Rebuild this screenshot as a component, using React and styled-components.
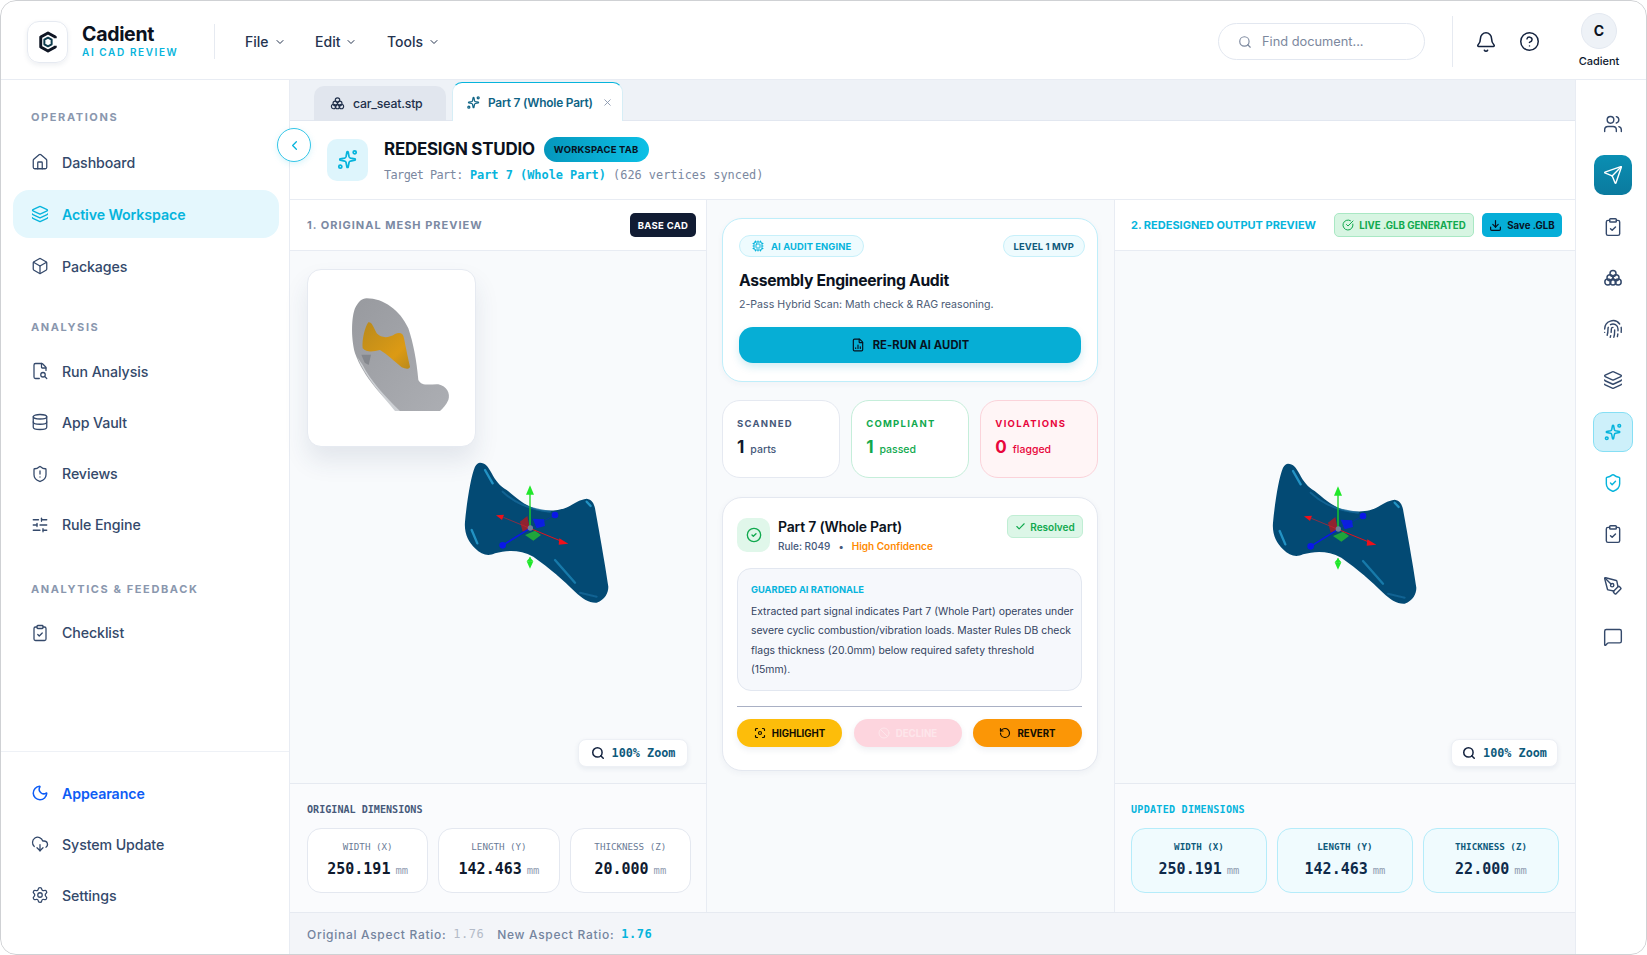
import React from 'react';
import styled, { createGlobalStyle } from 'styled-components';
import {
  Bell, Box, ChevronDown, ChevronLeft, CircleCheck, CircleCheckBig, CircleHelp, ClipboardCheck,
  CloudDownload, Cpu, Database, Download, FileChartColumn, FileSearch2, Fingerprint, Focus, House,
  Ban, Check, Layers, MessageSquare, Moon, PenTool, RotateCcw, Search, Send, Settings, ShieldAlert,
  ShieldCheck, SlidersHorizontal, Users, X
} from 'lucide-react';

const MONO = '"DejaVu Sans Mono", "Liberation Mono", monospace';
const CYAN = '#06b4dc';

const GlobalStyle = createGlobalStyle`
  html, body {
    margin: 0;
    padding: 0;
    background: #fff;
    font-family: Inter, "Noto Sans", sans-serif;
    -webkit-font-smoothing: antialiased;
  }
  * { box-sizing: border-box; }
`;

const Frame = styled.div`
  position: relative;
  width: 1647px;
  height: 955px;
  display: flex;
  flex-direction: column;
  background: #fff;
  border-radius: 16px;
  overflow: hidden;
  &::after {
    content: '';
    position: absolute;
    inset: 0;
    border: 1.5px solid #cfd1d4;
    border-radius: 16px;
    pointer-events: none;
  }
`;

/* top bar */
const TopBar = styled.header`
  height: 80px;
  flex: none;
  display: flex;
  align-items: center;
  padding: 4px 23px 0 27px;
  border-bottom: 1px solid #e8ecf3;
`;

const LogoBox = styled.div`
  width: 41px;
  height: 42px;
  border: 1px solid #e6eaf1;
  border-radius: 12px;
  display: flex;
  align-items: center;
  justify-content: center;
  box-shadow: 0 2px 5px rgba(30, 50, 90, 0.08);
`;

const Brand = styled.div`
  margin: -2px 0 0 14px;
  width: 95px;
  display: flex;
  flex-direction: column;
`;

const BrandName = styled.div`
  font-size: 19.5px;
  font-weight: 700;
  line-height: 24px;
  letter-spacing: -0.3px;
  color: #0b1220;
`;

const BrandSub = styled.div`
  font-size: 10px;
  font-weight: 600;
  line-height: 13px;
  letter-spacing: 1.6px;
  color: ${CYAN};
  white-space: nowrap;
`;

const VRule = styled.div`
  width: 1px;
  height: ${(p) => p.$h}px;
  margin-left: ${(p) => p.$ml}px;
  background: #e6eaf1;
`;

const Menu = styled.nav`
  margin-left: 30px;
  display: flex;
  gap: 29.5px;
`;

const MenuItem = styled.div`
  display: flex;
  align-items: center;
  gap: 5px;
  font-size: 14px;
  font-weight: 500;
  color: #25344f;
`;

const SearchBox = styled.div`
  margin-left: auto;
  width: 207px;
  height: 37px;
  border: 1px solid #e2e7f0;
  border-radius: 19px;
  display: flex;
  align-items: center;
  gap: 10px;
  padding-left: 19px;
  font-size: 12.8px;
  color: #7c889e;
`;

const HeadIcon = styled.div`
  margin-left: ${(p) => p.$ml}px;
  display: flex;
  color: #14233f;
`;

const UserBox = styled.div`
  margin-left: 34px;
  width: 50px;
  margin-top: -3px;
  display: flex;
  flex-direction: column;
  align-items: center;
  gap: 5px;
`;

const Avatar = styled.div`
  width: 36px;
  height: 36px;
  border-radius: 50%;
  background: #eef2f7;
  border: 1px solid #e3e8f0;
  display: flex;
  align-items: center;
  justify-content: center;
  font-size: 14px;
  font-weight: 700;
  color: #0b1220;
`;

const UserName = styled.div`
  font-size: 11px;
  font-weight: 500;
  color: #0f1a2e;
`;

/* left sidebar */
const Body = styled.div`
  flex: 1;
  display: flex;
  min-height: 0;
`;

const Sidebar = styled.aside`
  width: 290px;
  flex: none;
  display: flex;
  flex-direction: column;
  border-right: 1px solid #e8ecf3;
`;

const NavTop = styled.div`
  padding: 30px 10px 0 13px;
`;

const NavSection = styled.div`
  display: flex;
  flex-direction: column;
  gap: 3.2px;
  margin-bottom: 33px;
  &:first-child {
    gap: 4px;
    margin-bottom: 30px;
  }
`;

const NavLabel = styled.div`
  padding-left: 18px;
  height: 14px;
  margin-bottom: 10px;
  font-size: 11px;
  line-height: 14px;
  font-weight: 700;
  letter-spacing: 1.6px;
  color: #8a97ae;
`;

const NavRow = styled.div`
  height: 48px;
  display: flex;
  align-items: center;
  gap: 13px;
  padding-left: 18px;
  border-radius: 16px;
  font-size: 14.2px;
  letter-spacing: -0.1px;
  font-weight: ${(p) => (p.$active || p.$blue ? 600 : 500)};
  color: ${(p) => (p.$active ? CYAN : p.$blue ? '#0d5cf5' : '#34496b')};
  background: ${(p) => (p.$active ? '#e4f7fd' : 'transparent')};
`;

const NavBottom = styled.div`
  margin-top: auto;
  padding: 17px 10px 36px 13px;
  border-top: 1px solid #eef1f6;
  display: flex;
  flex-direction: column;
  gap: 3px;
`;

/* centre */
const Main = styled.main`
  position: relative;
  flex: 1;
  min-width: 0;
  display: flex;
  flex-direction: column;
`;

const CollapseBtn = styled.div`
  position: absolute;
  left: -13px;
  top: 48px;
  width: 34px;
  height: 34px;
  border-radius: 50%;
  background: #fff;
  border: 1px solid #35c6e8;
  color: ${CYAN};
  display: flex;
  align-items: center;
  justify-content: center;
  box-shadow: 0 2px 6px rgba(6, 180, 220, 0.15);
  z-index: 2;
`;

const TabBar = styled.div`
  height: 41px;
  flex: none;
  display: flex;
  align-items: flex-end;
  gap: 6px;
  padding-left: 24px;
  background: #eef2f7;
  border-bottom: 1px solid #e2e7f0;
`;

const Tab = styled.div`
  height: ${(p) => (p.$active ? 39 : 35)}px;
  margin-bottom: -1px;
  width: ${(p) => (p.$active ? 171 : 132)}px;
  display: flex;
  align-items: center;
  gap: ${(p) => (p.$active ? 7 : 8)}px;
  padding-left: ${(p) => (p.$active ? 13 : 16)}px;
  border-radius: 10px 10px 0 0;
  font-size: ${(p) => (p.$active ? 11.9 : 12.3)}px;
  font-weight: ${(p) => (p.$active ? 600 : 500)};
  letter-spacing: -0.2px;
  white-space: nowrap;
  color: ${(p) => (p.$active ? '#0e6385' : '#22314c')};
  background: ${(p) => (p.$active ? '#fff' : '#e1e6ee')};
  border: ${(p) => (p.$active ? '1px solid #d6eef6' : 'none')};
  border-top: ${(p) => (p.$active ? `1px solid ${CYAN}` : 'none')};
  border-bottom: none;
`;

const TabClose = styled.span`
  display: flex;
  margin-left: 2px;
  color: #8a97ae;
`;

const StudioHead = styled.div`
  height: 79px;
  flex: none;
  display: flex;
  align-items: center;
  gap: 16px;
  padding: 0 0 1px 37px;
  background: #fff;
  border-bottom: 1px solid #e8ecf3;
`;

const StudioIcon = styled.div`
  width: 41px;
  height: 42px;
  border-radius: 10px;
  background: #def5fc;
  color: ${CYAN};
  display: flex;
  align-items: center;
  justify-content: center;
`;

const StudioText = styled.div`
  display: flex;
  flex-direction: column;
  gap: 6px;
`;

const TitleRow = styled.div`
  display: flex;
  align-items: center;
  gap: 9px;
`;

const StudioTitle = styled.h1`
  margin: 0;
  font-size: 16.9px;
  line-height: 26px;
  font-weight: 700;
  letter-spacing: -0.2px;
  color: #0b1220;
`;

const WorkspaceBadge = styled.span`
  height: 25px;
  padding: 0 10px;
  border-radius: 13px;
  background: linear-gradient(90deg, #0597bd, #0cc0e6);
  display: flex;
  align-items: center;
  font-size: 9.5px;
  font-weight: 700;
  letter-spacing: 0.2px;
  color: #06121f;
`;

const StudioSub = styled.div`
  font-family: ${MONO};
  font-size: 11.9px;
  line-height: 15px;
  color: #7b889f;
  i {
    font-style: normal;
    letter-spacing: -0.6px;
  }
  b {
    font-weight: 700;
    color: ${CYAN};
  }
`;

const Columns = styled.div`
  flex: 1;
  min-height: 0;
  display: grid;
  grid-template-columns: 416px 409px 460px;
`;

const Column = styled.section`
  display: flex;
  flex-direction: column;
  min-width: 0;
  background: #fff;
`;

const ColHead = styled.div`
  height: 51px;
  flex: none;
  display: flex;
  align-items: center;
  padding: 0 10px 0 ${(p) => (p.$right ? 16 : 17)}px;
  border-bottom: 1px solid #e8ecf3;
`;

const ColTitle = styled.div`
  font-size: 11px;
  font-weight: 700;
  letter-spacing: ${(p) => (p.$cyan ? 0 : 1)}px;
  color: ${(p) => (p.$cyan ? CYAN : '#7b8aa3')};
`;

const DarkBadge = styled.div`
  margin-left: auto;
  width: 66px;
  height: 24px;
  border-radius: 5px;
  background: #111c33;
  color: #fff;
  display: flex;
  align-items: center;
  justify-content: center;
  font-size: 9.5px;
  font-weight: 700;
  letter-spacing: 0.3px;
`;

const LiveBadge = styled.div`
  margin-left: auto;
  width: 140px;
  height: 24px;
  border-radius: 5px;
  background: #d7f5e2;
  border: 1px solid #a9e8c4;
  color: #10a94e;
  display: flex;
  align-items: center;
  justify-content: center;
  gap: 5px;
  font-size: 9.7px;
  font-weight: 700;
`;

const SaveBadge = styled.div`
  margin-left: 8px;
  margin-right: 3px;
  width: 80px;
  height: 24px;
  border-radius: 5px;
  background: #06aed8;
  color: #06121f;
  display: flex;
  align-items: center;
  justify-content: center;
  gap: 5px;
  font-size: 9.7px;
  font-weight: 700;
`;

const Viewer = styled.div`
  position: relative;
  flex: 1;
  background: #f8fafc;
`;

const Thumb = styled.div`
  position: absolute;
  left: 17px;
  top: 18px;
  width: 169px;
  height: 178px;
  padding: 10px 0 0 12px;
  border: 1px solid #e6eaf1;
  border-radius: 14px;
  background: #fff;
  box-shadow: 0 14px 24px rgba(40, 60, 100, 0.1);
`;

const MeshHolder = styled.div`
  position: absolute;
  left: ${(p) => p.$x}px;
  top: ${(p) => p.$y}px;
  width: 200px;
  height: 180px;
`;

const ZoomChip = styled.div`
  position: absolute;
  right: ${(p) => p.$r}px;
  bottom: 16px;
  width: ${(p) => p.$w}px;
  height: 28px;
  border-radius: 8px;
  background: #fff;
  border: 1px solid #edf0f5;
  box-shadow: 0 2px 5px rgba(40, 60, 100, 0.08);
  display: flex;
  align-items: center;
  justify-content: center;
  gap: 7px;
  font-family: ${MONO};
  font-size: 11.8px;
  font-weight: 700;
  color: #0e5a7c;
  svg {
    color: #14233f;
  }
`;

const DimPanel = styled.div`
  height: 129px;
  flex: none;
  padding: 19px ${(p) => (p.$cyan ? 16 : 15)}px 0 ${(p) => (p.$cyan ? 16 : 17)}px;
  background: #fafbfd;
  border-top: 1px solid #e6eaf1;
`;

const DimTitle = styled.div`
  height: 14px;
  margin-bottom: 11px;
  font-family: ${MONO};
  font-size: 10.1px;
  line-height: 14px;
  font-weight: 700;
  letter-spacing: ${(p) => (p.$cyan ? 0.25 : 0)}px;
  color: ${(p) => (p.$cyan ? CYAN : '#46597a')};
`;

const DimGrid = styled.div`
  display: grid;
  grid-template-columns: 1fr 1fr 1fr;
  gap: 10px;
`;

const DimCard = styled.div`
  height: 65px;
  border-radius: 14px;
  border: 1px solid ${(p) => (p.$cyan ? '#b5ecfa' : '#e4e8f0')};
  background: ${(p) => (p.$cyan ? '#f0fbfe' : '#fff')};
  display: flex;
  flex-direction: column;
  align-items: center;
  justify-content: center;
  gap: 7px;
`;

const DimName = styled.div`
  font-family: ${MONO};
  font-size: 9.2px;
  line-height: 12px;
  font-weight: ${(p) => (p.$cyan ? 700 : 400)};
  color: ${(p) => (p.$cyan ? '#0e5a7c' : '#6a7b96')};
`;

const DimValue = styled.div`
  font-family: ${MONO};
  font-size: 15px;
  line-height: 19px;
  font-weight: 700;
  color: ${(p) => (p.$cyan ? '#0e2a4a' : '#0f1a2e')};
  small {
    margin-left: 5px;
    font-size: 10.5px;
    font-weight: 400;
    color: #8f9bb0;
  }
`;

/* audit column */
const AuditColumn = styled.section`
  display: flex;
  flex-direction: column;
  gap: 18px;
  padding: 18px 16px 0 15px;
  background: #f8fafc;
  border-left: 1px solid #e8ecf3;
  border-right: 1px solid #e8ecf3;
`;

const EngineCard = styled.div`
  height: 164px;
  padding: 16px 16px 0;
  border: 1px solid #bfeefa;
  border-radius: 20px;
  background: #fff;
  box-shadow: 0 2px 6px rgba(40, 60, 100, 0.04);
`;

const PillRow = styled.div`
  display: flex;
  justify-content: space-between;
  margin-right: -4px;
`;

const Pill = styled.div`
  height: 22px;
  padding: 0 ${(p) => (p.$dark ? 10 : 12)}px;
  border-radius: 11px;
  border: 1px solid #c7f0fa;
  background: #eefbfe;
  display: flex;
  align-items: center;
  gap: 7px;
  font-size: 9.4px;
  font-weight: 700;
  letter-spacing: 0.1px;
  color: ${(p) => (p.$dark ? '#0e5a7c' : CYAN)};
`;

const EngineTitle = styled.h2`
  margin: 12px 0 0;
  font-size: 15.7px;
  line-height: 24px;
  font-weight: 700;
  letter-spacing: -0.3px;
  color: #0b1220;
`;

const EngineSub = styled.p`
  margin: 4px 0 0;
  font-size: 10.6px;
  line-height: 16px;
  color: #4a5a75;
`;

const RunButton = styled.div`
  margin-top: 14px;
  height: 36px;
  border-radius: 14px;
  background: #06aed5;
  box-shadow: 0 4px 8px rgba(6, 150, 190, 0.18);
  display: flex;
  align-items: center;
  justify-content: center;
  gap: 8px;
  font-size: 11.2px;
  font-weight: 700;
  letter-spacing: 0.1px;
  color: #06121f;
`;

const StatGrid = styled.div`
  display: grid;
  grid-template-columns: 1fr 1fr 1fr;
  gap: 11.5px;
`;

const statTheme = {
  plain: { border: '#e5e9f1', bg: '#fff', label: '#46597a', num: '#0f1a2e', unit: '#46597a' },
  good: { border: '#c5eeda', bg: '#fff', label: '#10a94e', num: '#10a94e', unit: '#10a94e' },
  bad: { border: '#fbd3da', bg: '#fff5f6', label: '#e8063c', num: '#e8063c', unit: '#e8063c' }
};

const StatCard = styled.div`
  height: 78px;
  padding: 16px 0 0 14px;
  border-radius: 18px;
  border: 1px solid ${(p) => statTheme[p.$tone].border};
  background: ${(p) => statTheme[p.$tone].bg};
`;

const StatLabel = styled.div`
  font-size: 9.5px;
  line-height: 13px;
  font-weight: 700;
  letter-spacing: 1.25px;
  color: ${(p) => statTheme[p.$tone].label};
`;

const StatValue = styled.div`
  margin-top: 5px;
  display: flex;
  align-items: baseline;
  gap: 6px;
  font-size: 17px;
  line-height: 24px;
  font-weight: 700;
  color: ${(p) => statTheme[p.$tone].num};
  span {
    font-size: 10.5px;
    font-weight: 500;
    color: ${(p) => statTheme[p.$tone].unit};
  }
`;

const PartCard = styled.div`
  margin-top: 1px;
  height: 274px;
  padding: 18px 15px 0 14px;
  border: 1px solid #e4e8f0;
  border-radius: 20px;
  background: #fff;
  box-shadow: 0 2px 6px rgba(40, 60, 100, 0.05);
`;

const PartHead = styled.div`
  display: flex;
  align-items: flex-start;
  height: 52px;
`;

const PartIcon = styled.div`
  margin-top: 2px;
  width: 33px;
  height: 34px;
  border-radius: 10px;
  background: #e0f7ea;
  color: #10a94e;
  display: flex;
  align-items: center;
  justify-content: center;
`;

const PartInfo = styled.div`
  margin-left: 8px;
`;

const PartName = styled.div`
  font-size: 14px;
  line-height: 21px;
  font-weight: 600;
  letter-spacing: -0.2px;
  color: #0b1220;
`;

const PartMeta = styled.div`
  margin-top: 2px;
  display: flex;
  gap: 8px;
  font-size: 10px;
  line-height: 15px;
  font-weight: 500;
  color: #46597a;
  b {
    font-weight: 600;
    color: #ff8a00;
  }
`;

const Resolved = styled.div`
  margin: -1px -1px 0 auto;
  width: 76px;
  height: 23px;
  border-radius: 6px;
  background: #dcf6e7;
  border: 1px solid #c0eed4;
  color: #10a94e;
  display: flex;
  align-items: center;
  justify-content: center;
  gap: 4px;
  font-size: 10px;
  font-weight: 600;
`;

const Rationale = styled.div`
  height: 123px;
  padding: 14px 4px 0 13px;
  border: 1px solid #e2e7f0;
  border-radius: 14px;
  background: #f6f8fc;
`;

const RationaleLabel = styled.div`
  font-size: 9.3px;
  line-height: 14px;
  font-weight: 700;
  color: ${CYAN};
`;

const RationaleText = styled.p`
  margin: 5px 0 0;
  font-size: 10.4px;
  line-height: 19.3px;
  white-space: nowrap;
  color: #33435f;
`;

const HRule = styled.div`
  height: 1px;
  margin-top: 15px;
  background: #a9b0c4;
`;

const ActionRow = styled.div`
  margin-top: 12px;
  display: grid;
  grid-template-columns: 105px 108px 109px;
  justify-content: space-between;
`;

const actionColors = { yellow: '#fdbd0a', pink: '#fdd5de', orange: '#fb9606' };

const ActionBtn = styled.div`
  height: 28px;
  border-radius: 14px;
  background: ${(p) => actionColors[p.$tone]};
  box-shadow: 0 3px 6px rgba(40, 60, 100, 0.08);
  color: ${(p) => (p.$tone === 'pink' ? '#fde6eb' : '#120d02')};
  display: flex;
  align-items: center;
  justify-content: center;
  gap: 6px;
  font-size: 9.7px;
  font-weight: 700;
`;

const Footer = styled.div`
  height: 43px;
  flex: none;
  display: flex;
  align-items: center;
  padding-left: 17px;
  background: #f3f5f9;
  border-top: 1px solid #e6eaf1;
  font-size: 12px;
  font-weight: 500;
  letter-spacing: 0.7px;
  color: #74849e;
`;

const FooterNum = styled.span`
  margin: 0 ${(p) => p.$mr}px 0 7px;
  font-family: ${MONO};
  font-size: 12px;
  font-weight: ${(p) => (p.$cyan ? 700 : 400)};
  letter-spacing: 0.5px;
  color: ${(p) => (p.$cyan ? CYAN : '#b3bbc8')};
`;

/* right rail */
const Rail = styled.aside`
  width: 72px;
  flex: none;
  display: flex;
  flex-direction: column;
  align-items: center;
  gap: 11.3px;
  padding: 24px 0 0 2px;
  border-left: 1px solid #e8ecf3;
  color: #34496b;
`;

const railStyles = {
  send: 'width: 38px; background: linear-gradient(180deg, #0a8fb3, #0b7a9e); color: #fff; border-radius: 10px;',
  spark: 'width: 40px; background: #cdf0fa; border: 1px solid #86dff4; color: #06b4dc; border-radius: 10px;',
  cyan: 'color: #06b4dc;',
  plain: ''
};

const RailBtn = styled.div`
  width: 38px;
  height: 40px;
  display: flex;
  align-items: center;
  justify-content: center;
  ${(p) => railStyles[p.$kind || 'plain']}
`;

function SparkStar ({ size = 22, width = 1.8 }) {
  return (
    <svg width={size} height={size} viewBox="0 0 24 24" fill="none" stroke="currentColor" strokeWidth={width} strokeLinejoin="round">
      <path d="M11.4 4.2a.7.7 0 0 1 1.3 0l.9 4.8a2 2 0 0 0 1.5 1.5l4.6.9a.7.7 0 0 1 0 1.3l-4.6.9a2 2 0 0 0-1.5 1.5l-.9 4.8a.7.7 0 0 1-1.3 0l-.9-4.8a2 2 0 0 0-1.5-1.5l-4.6-.9a.7.7 0 0 1 0-1.3l4.6-.9a2 2 0 0 0 1.5-1.5z" />
      <circle cx="19.5" cy="4.5" r="1.6" />
      <circle cx="4.5" cy="19.5" r="1.6" />
    </svg>
  );
}

function Cluster ({ size = 21, width = 1.4 }) {
  return (
    <svg width={size} height={size} viewBox="0 0 24 24" fill="none" stroke="currentColor" strokeWidth={width}>
      <circle cx="12" cy="6.5" r="3.6" />
      <circle cx="8.4" cy="11.8" r="3.6" />
      <circle cx="15.6" cy="11.8" r="3.6" />
      <circle cx="5.8" cy="16.8" r="3.6" />
      <circle cx="12" cy="16.8" r="3.6" />
      <circle cx="18.2" cy="16.8" r="3.6" />
    </svg>
  );
}

function LogoMark () {
  return (
    <svg width="20" height="22" viewBox="0 0 22 24" fill="none" strokeLinejoin="round">
      <path d="M19 8V6.6L11 2 3 6.5v11L11 22l8-4.6V16" stroke="#0f1624" strokeWidth="3.2" />
      <path d="M15 9.5 11 7.2 7 9.5v5l4 2.3 4-2.3z" stroke="#0f3d4e" strokeWidth="2.2" />
    </svg>
  );
}

function ThumbShape () {
  return (
    <svg width="150" height="150" viewBox="0 0 450 450">
      <defs>
        <linearGradient id="thumbGrey" x1="0" y1="0" x2="1" y2="1">
          <stop offset="0" stopColor="#989a9f" />
          <stop offset="1" stopColor="#acaeb3" />
        </linearGradient>
        <linearGradient id="thumbGold" x1="0" y1="0" x2="1" y2="1">
          <stop offset="0" stopColor="#b98a1c" />
          <stop offset="0.7" stopColor="#dc9a14" />
          <stop offset="1" stopColor="#b98a1c" />
        </linearGradient>
      </defs>
      <path d="M140 55C190 55 240 90 265 145C280 190 290 240 295 300C305 320 330 312 355 313C380 318 392 340 385 360C378 375 370 385 360 393L235 393C190 355 130 290 105 220C92 170 95 110 105 85C115 65 125 56 140 55Z" fill="url(#thumbGrey)" />
      <path d="M112 232C135 290 190 350 225 393L240 393C195 350 150 300 128 255Z" fill="#cdd0d4" />
      <path d="M124 224L153 224L146 255L134 248Z" fill="#84878d" />
      <path d="M145 127C155 125 160 140 170 160C185 175 205 175 225 162C240 155 250 160 252 175C258 205 265 240 270 260C268 268 258 268 245 262C225 245 200 222 180 210C160 215 140 218 128 205C125 180 135 140 145 127Z" fill="url(#thumbGold)" />
    </svg>
  );
}

function MeshGizmo () {
  return (
    <svg width="200" height="180" viewBox="0 0 600 540" fill="none">
      <defs>
        <filter id="meshSoft"><feGaussianBlur stdDeviation="2" /></filter>
      </defs>
      <path d="M120 68C135 68 145 80 155 100C165 120 180 140 200 150C225 170 250 195 290 208C320 215 365 212 385 200C400 192 420 178 440 176C455 178 462 190 465 205C475 260 495 370 505 440C505 460 495 478 470 488C450 490 425 475 405 455C370 420 330 385 280 350C240 328 200 330 165 340C145 350 125 345 105 325C85 305 72 280 75 245C80 190 92 110 105 80C110 72 115 68 120 68Z" fill="#034a74" />
      <g stroke="#2ba5d8" strokeLinecap="round" filter="url(#meshSoft)" opacity="0.8">
        <path d="M135 90L158 130" strokeWidth="7" />
        <path d="M188 155C220 185 260 208 330 215" strokeWidth="6" stroke="#14699a" />
        <path d="M345 360L405 428" strokeWidth="7" stroke="#1c86b8" />
        <path d="M95 270L112 310" strokeWidth="7" />
        <path d="M440 185L452 198" strokeWidth="7" />
        <path d="M420 458L470 470" strokeWidth="6" stroke="#14699a" />
      </g>
      <path d="M240 245L262 228L270 268L248 275Z" fill="#8f2330" />
      <path d="M278 236L312 238L315 258L290 265Z" fill="#0c1fe0" />
      <path d="M255 285L285 272L303 285L280 302Z" fill="#1fa53c" />
      <circle cx="345" cy="225" r="10" fill="#0a18e8" />
      <path d="M270 265L345 225" stroke="#0a18e8" strokeWidth="2" opacity="0.5" />
      <path d="M270 265L188 316" stroke="#0a18e8" strokeWidth="5" />
      <circle cx="188" cy="316" r="10" fill="#0a18e8" />
      <path d="M270 265L360 302" stroke="#e5121a" strokeWidth="3" />
      <path d="M358 295L385 311L356 314Z" fill="#f0101a" />
      <path d="M270 265L190 232" stroke="#c8202c" strokeWidth="2" />
      <path d="M192 224L168 226L186 240Z" fill="#f0101a" />
      <path d="M270 265V160" stroke="#18d622" strokeWidth="4" />
      <path d="M270 136L282 164H258Z" fill="#20e82a" />
      <path d="M270 352V372" stroke="#18d622" strokeWidth="4" />
      <path d="M270 386L280 364H260Z" fill="#20e82a" />
      <path d="M270 352L280 364H260Z" fill="#20e82a" />
      <circle cx="271" cy="264" r="8" fill="#6f7f9a" />
    </svg>
  );
}

const navGroups = [
  {
    label: 'OPERATIONS',
    items: [
      { name: 'Dashboard', icon: House },
      { name: 'Active Workspace', icon: Layers, active: true },
      { name: 'Packages', icon: Box }
    ]
  },
  {
    label: 'ANALYSIS',
    items: [
      { name: 'Run Analysis', icon: FileSearch2 },
      { name: 'App Vault', icon: Database },
      { name: 'Reviews', icon: ShieldAlert },
      { name: 'Rule Engine', icon: SlidersHorizontal }
    ]
  },
  {
    label: 'ANALYTICS & FEEDBACK',
    items: [{ name: 'Checklist', icon: ClipboardCheck }]
  }
];

const railItems = [
  { icon: Users },
  { icon: Send, kind: 'send' },
  { icon: ClipboardCheck },
  { custom: Cluster },
  { icon: Fingerprint },
  { icon: Layers },
  { custom: SparkStar, kind: 'spark' },
  { icon: ShieldCheck, kind: 'cyan' },
  { icon: ClipboardCheck },
  { icon: PenTool },
  { icon: MessageSquare }
];

const originalDims = [
  { name: 'WIDTH (X)', value: '250.191' },
  { name: 'LENGTH (Y)', value: '142.463' },
  { name: 'THICKNESS (Z)', value: '20.000' }
];

const updatedDims = [
  { name: 'WIDTH (X)', value: '250.191' },
  { name: 'LENGTH (Y)', value: '142.463' },
  { name: 'THICKNESS (Z)', value: '22.000' }
];

function Dimensions ({ title, dims, cyan }) {
  return (
    <DimPanel $cyan={cyan}>
      <DimTitle $cyan={cyan}>{title}</DimTitle>
      <DimGrid>
        {dims.map((d) => (
          <DimCard key={d.name} $cyan={cyan}>
            <DimName $cyan={cyan}>{d.name}</DimName>
            <DimValue $cyan={cyan}>{d.value}<small>mm</small></DimValue>
          </DimCard>
        ))}
      </DimGrid>
    </DimPanel>
  );
}

function App () {
  return (
    <Frame>
      <GlobalStyle />
      <TopBar>
        <LogoBox><LogoMark /></LogoBox>
        <Brand>
          <BrandName>Cadient</BrandName>
          <BrandSub>AI CAD REVIEW</BrandSub>
        </Brand>
        <VRule $h={35} $ml={37} />
        <Menu>
          {['File', 'Edit', 'Tools'].map((m) => (
            <MenuItem key={m}>{m}<ChevronDown size={12} strokeWidth={2} /></MenuItem>
          ))}
        </Menu>
        <SearchBox><Search size={14} strokeWidth={2} />Find document...</SearchBox>
        <VRule $h={51} $ml={27} />
        <HeadIcon $ml={22}><Bell size={22} strokeWidth={1.7} /></HeadIcon>
        <HeadIcon $ml={22}><CircleHelp size={21} strokeWidth={1.7} /></HeadIcon>
        <UserBox>
          <Avatar>C</Avatar>
          <UserName>Cadient</UserName>
        </UserBox>
      </TopBar>
      <Body>
        <Sidebar>
          <NavTop>
            {navGroups.map((g) => (
              <NavSection key={g.label}>
                <NavLabel>{g.label}</NavLabel>
                {g.items.map((item) => (
                  <NavRow key={item.name} $active={item.active}>
                    <item.icon size={18} strokeWidth={1.7} />
                    {item.name}
                  </NavRow>
                ))}
              </NavSection>
            ))}
          </NavTop>
          <NavBottom>
            <NavRow $blue><Moon size={18} strokeWidth={2} />Appearance</NavRow>
            <NavRow><CloudDownload size={18} strokeWidth={1.7} />System Update</NavRow>
            <NavRow><Settings size={18} strokeWidth={1.7} />Settings</NavRow>
          </NavBottom>
        </Sidebar>
        <Main>
          <CollapseBtn><ChevronLeft size={15} strokeWidth={2} /></CollapseBtn>
          <TabBar>
            <Tab><Cluster size={15} width={1.8} />car_seat.stp</Tab>
            <Tab $active>
              <SparkStar size={15} width={2} />
              Part 7 (Whole Part)
              <TabClose><X size={11} strokeWidth={2} /></TabClose>
            </Tab>
          </TabBar>
          <StudioHead>
            <StudioIcon><SparkStar size={23} /></StudioIcon>
            <StudioText>
              <TitleRow>
                <StudioTitle>REDESIGN STUDIO</StudioTitle>
                <WorkspaceBadge>WORKSPACE TAB</WorkspaceBadge>
              </TitleRow>
              <StudioSub><i>Target Part:</i> <b>Part 7 (Whole Part)</b> (626 vertices synced)</StudioSub>
            </StudioText>
          </StudioHead>
          <Columns>
            <Column>
              <ColHead>
                <ColTitle>1. ORIGINAL MESH PREVIEW</ColTitle>
                <DarkBadge>BASE CAD</DarkBadge>
              </ColHead>
              <Viewer>
                <MeshHolder $x={150} $y={189}><MeshGizmo /></MeshHolder>
                <Thumb><ThumbShape /></Thumb>
                <ZoomChip $r={18} $w={110}><Search size={14} strokeWidth={2.6} />100% Zoom</ZoomChip>
              </Viewer>
              <Dimensions title="ORIGINAL DIMENSIONS" dims={originalDims} />
            </Column>
            <AuditColumn>
              <EngineCard>
                <PillRow>
                  <Pill><Cpu size={12} strokeWidth={2} />AI AUDIT ENGINE</Pill>
                  <Pill $dark>LEVEL 1 MVP</Pill>
                </PillRow>
                <EngineTitle>Assembly Engineering Audit</EngineTitle>
                <EngineSub>2-Pass Hybrid Scan: Math check &amp; RAG reasoning.</EngineSub>
                <RunButton><FileChartColumn size={14} strokeWidth={2} />RE-RUN AI AUDIT</RunButton>
              </EngineCard>
              <StatGrid>
                <StatCard $tone="plain">
                  <StatLabel $tone="plain">SCANNED</StatLabel>
                  <StatValue $tone="plain">1<span>parts</span></StatValue>
                </StatCard>
                <StatCard $tone="good">
                  <StatLabel $tone="good">COMPLIANT</StatLabel>
                  <StatValue $tone="good">1<span>passed</span></StatValue>
                </StatCard>
                <StatCard $tone="bad">
                  <StatLabel $tone="bad">VIOLATIONS</StatLabel>
                  <StatValue $tone="bad">0<span>flagged</span></StatValue>
                </StatCard>
              </StatGrid>
              <PartCard>
                <PartHead>
                  <PartIcon><CircleCheck size={16} strokeWidth={2} /></PartIcon>
                  <PartInfo>
                    <PartName>Part 7 (Whole Part)</PartName>
                    <PartMeta>Rule: R049<span>•</span><b>High Confidence</b></PartMeta>
                  </PartInfo>
                  <Resolved><Check size={11} strokeWidth={2.4} />Resolved</Resolved>
                </PartHead>
                <Rationale>
                  <RationaleLabel>GUARDED AI RATIONALE</RationaleLabel>
                  <RationaleText>
                    Extracted part signal indicates Part 7 (Whole Part) operates under<br />
                    severe cyclic combustion/vibration loads. Master Rules DB check<br />
                    flags thickness (20.0mm) below required safety threshold<br />
                    (15mm).
                  </RationaleText>
                </Rationale>
                <HRule />
                <ActionRow>
                  <ActionBtn $tone="yellow"><Focus size={12} strokeWidth={2.4} />HIGHLIGHT</ActionBtn>
                  <ActionBtn $tone="pink"><Ban size={12} strokeWidth={2} />DECLINE</ActionBtn>
                  <ActionBtn $tone="orange"><RotateCcw size={12} strokeWidth={2.4} />REVERT</ActionBtn>
                </ActionRow>
              </PartCard>
            </AuditColumn>
            <Column>
              <ColHead $right>
                <ColTitle $cyan>2. REDESIGNED OUTPUT PREVIEW</ColTitle>
                <LiveBadge><CircleCheckBig size={12} strokeWidth={2} />LIVE .GLB GENERATED</LiveBadge>
                <SaveBadge><Download size={13} strokeWidth={2.2} />Save .GLB</SaveBadge>
              </ColHead>
              <Viewer>
                <MeshHolder $x={133} $y={190}><MeshGizmo /></MeshHolder>
                <ZoomChip $r={17} $w={107}><Search size={14} strokeWidth={2.6} />100% Zoom</ZoomChip>
              </Viewer>
              <Dimensions title="UPDATED DIMENSIONS" dims={updatedDims} cyan />
            </Column>
          </Columns>
          <Footer>
            Original Aspect Ratio:<FooterNum $mr={13}>1.76</FooterNum>
            New Aspect Ratio:<FooterNum $cyan $mr={0}>1.76</FooterNum>
          </Footer>
        </Main>
        <Rail>
          {railItems.map((r, i) => {
            const Icon = r.icon || r.custom;
            return (
              <RailBtn key={i} $kind={r.kind}>
                {r.icon ? <Icon size={20} strokeWidth={1.7} /> : <Icon size={20} width={1.8} />}
              </RailBtn>
            );
          })}
        </Rail>
      </Body>
    </Frame>
  );
}

export default App;
